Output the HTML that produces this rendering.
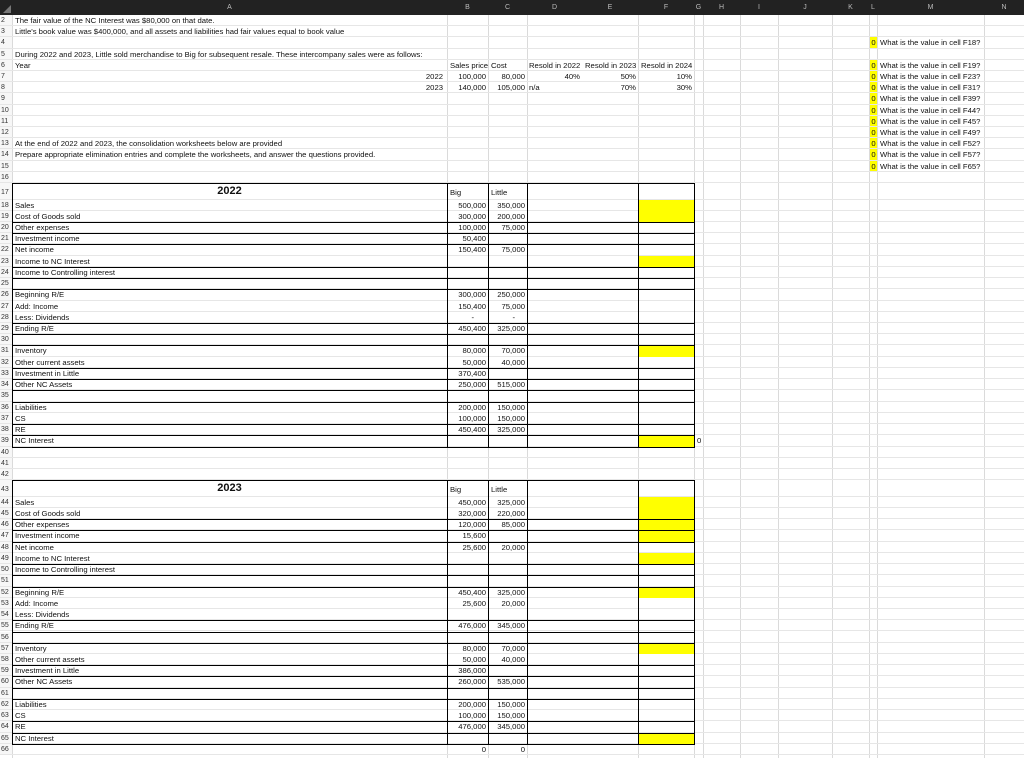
<!DOCTYPE html>
<html><head><meta charset="utf-8"><style>
*{margin:0;padding:0;box-sizing:border-box}
body{width:1024px;height:758px;overflow:hidden;background:#fff;position:relative;font-family:"Liberation Sans",Arial,sans-serif;font-size:7.7px;color:#111}
.hd{position:absolute;left:0;top:0;width:1024px;height:15px;background:#222}
.hd span{position:absolute;top:0;line-height:15px;color:#bbb;font-size:7px;text-align:center}
.corner{position:absolute;left:3px;top:5px;width:0;height:0;border-left:8px solid transparent;border-bottom:8px solid #777}
.r{position:absolute;left:0;width:1024px;height:11.23px;line-height:11px;border-bottom:1px solid #e6e6e6}
.r.s{height:11.2px}
.r.t{height:16.5px;line-height:20px}
.n{position:absolute;left:0;width:12px;padding-left:1px;color:#333;font-size:7px;background:#f7f7f7;height:100%}
.c{position:absolute;top:0;white-space:nowrap;height:100%}
.a{left:15px;width:430px}
.ar{left:12px;width:433px;text-align:right;padding-right:2px}
.b{left:448px;width:40px;text-align:right;padding-right:2px}
.bl{left:450px}
.cc{left:489px;width:38px;text-align:right;padding-right:2px}
.cl{left:491px}
.d{left:528px;width:54px;text-align:right;padding-right:2px}
.dl{left:529px}
.e{left:583px;width:55px;text-align:right;padding-right:2px}
.el{left:585px}
.f{left:639px;width:55px;text-align:right;padding-right:2px}
.fl{left:641px}
.y{position:absolute;left:639px;width:55px;background:#ffff00}
.ly{left:870px;width:7px;background:#ffff00;text-align:center}
.m{left:880px}
.vg{position:absolute;top:15px;width:1px;height:743px;background:#dadada}
.vb{position:absolute;width:1px;background:#000}
.hb{position:absolute;left:12px;width:683px;height:1px;background:#000}
.wt{position:absolute;left:13px;width:681px;background:#fff}
</style></head><body>
<div class="hd"><div class="corner"></div>
<span style="left:12px;width:435px">A</span><span style="left:447px;width:41px">B</span><span style="left:488px;width:39px">C</span><span style="left:527px;width:55px">D</span><span style="left:582px;width:56px">E</span><span style="left:638px;width:56px">F</span><span style="left:694px;width:9px">G</span><span style="left:703px;width:37px">H</span><span style="left:740px;width:38px">I</span><span style="left:778px;width:54px">J</span><span style="left:832px;width:37px">K</span><span style="left:869px;width:8px">L</span><span style="left:877px;width:107px">M</span><span style="left:984px;width:40px">N</span>
</div>

<div class="vg" style="left:12px"></div>
<div class="vg" style="left:447px"></div><div class="vg" style="left:488px"></div><div class="vg" style="left:527px"></div><div class="vg" style="left:638px"></div><div class="vg" style="left:694px"></div><div class="vg" style="left:703px"></div><div class="vg" style="left:740px"></div><div class="vg" style="left:778px"></div><div class="vg" style="left:832px"></div><div class="vg" style="left:869px"></div><div class="vg" style="left:877px"></div><div class="vg" style="left:984px"></div>

<div class="r s" style="top:15px"><span class="n">2</span><span class="c a">The fair value of the NC Interest was $80,000 on that date.</span></div>
<div class="r s" style="top:26.2px"><span class="n">3</span><span class="c a">Little's book value was $400,000, and all assets and liabilities had fair values equal to book value</span></div>
<div class="r s" style="top:37.4px"><span class="n">4</span><span class="c ly">0</span><span class="c m">What is the value in cell F18?</span></div>
<div class="r s" style="top:48.6px"><span class="n">5</span><span class="c a">During 2022 and 2023, Little sold merchandise to Big for subsequent resale. These intercompany sales were as follows:</span></div>
<div class="r s" style="top:59.8px"><span class="n">6</span><span class="c a">Year</span><span class="c bl">Sales price</span><span class="c cl">Cost</span><span class="c dl">Resold in 2022</span><span class="c el">Resold in 2023</span><span class="c fl">Resold in 2024</span><span class="c ly">0</span><span class="c m">What is the value in cell F19?</span></div>
<div class="r s" style="top:71px"><span class="n">7</span><span class="c ar">2022</span><span class="c b">100,000</span><span class="c cc">80,000</span><span class="c d">40%</span><span class="c e">50%</span><span class="c f">10%</span><span class="c ly">0</span><span class="c m">What is the value in cell F23?</span></div>
<div class="r s" style="top:82.2px"><span class="n">8</span><span class="c ar">2023</span><span class="c b">140,000</span><span class="c cc">105,000</span><span class="c dl">n/a</span><span class="c e">70%</span><span class="c f">30%</span><span class="c ly">0</span><span class="c m">What is the value in cell F31?</span></div>
<div class="r s" style="top:93.4px"><span class="n">9</span><span class="c ly">0</span><span class="c m">What is the value in cell F39?</span></div>
<div class="r s" style="top:104.6px"><span class="n">10</span><span class="c ly">0</span><span class="c m">What is the value in cell F44?</span></div>
<div class="r s" style="top:115.8px"><span class="n">11</span><span class="c ly">0</span><span class="c m">What is the value in cell F45?</span></div>
<div class="r s" style="top:127px"><span class="n">12</span><span class="c ly">0</span><span class="c m">What is the value in cell F49?</span></div>
<div class="r s" style="top:138.2px"><span class="n">13</span><span class="c a">At the end of 2022 and 2023, the consolidation worksheets below are provided</span><span class="c ly">0</span><span class="c m">What is the value in cell F52?</span></div>
<div class="r s" style="top:149.4px"><span class="n">14</span><span class="c a">Prepare appropriate elimination entries and complete the worksheets, and answer the questions provided.</span><span class="c ly">0</span><span class="c m">What is the value in cell F57?</span></div>
<div class="r s" style="top:160.6px"><span class="n">15</span><span class="c ly">0</span><span class="c m">What is the value in cell F65?</span></div>
<div class="r s" style="top:171.8px"><span class="n">16</span></div>

<div class="wt" style="top:184px;height:262px"></div>
<div class="r t" style="top:183px"><span class="n">17</span><span class="c" style="left:12px;width:435px;text-align:center;font-weight:bold;font-size:11px;line-height:17px">2022</span><span class="c bl">Big</span><span class="c cl">Little</span></div>
<div class="r" style="top:199.5px"><span class="n">18</span><span class="c a">Sales</span><span class="c b">500,000</span><span class="c cc">350,000</span></div>
<div class="r" style="top:210.73px"><span class="n">19</span><span class="c a">Cost of Goods sold</span><span class="c b">300,000</span><span class="c cc">200,000</span></div>
<div class="r" style="top:221.96px"><span class="n">20</span><span class="c a">Other expenses</span><span class="c b">100,000</span><span class="c cc">75,000</span></div>
<div class="r" style="top:233.19px"><span class="n">21</span><span class="c a">Investment income</span><span class="c b">50,400</span></div>
<div class="r" style="top:244.42px"><span class="n">22</span><span class="c a">Net income</span><span class="c b">150,400</span><span class="c cc">75,000</span></div>
<div class="r" style="top:255.65px"><span class="n">23</span><span class="c a">Income to NC Interest</span></div>
<div class="r" style="top:266.88px"><span class="n">24</span><span class="c a">Income to Controlling interest</span></div>
<div class="r" style="top:278.11px"><span class="n">25</span></div>
<div class="r" style="top:289.34px"><span class="n">26</span><span class="c a">Beginning R/E</span><span class="c b">300,000</span><span class="c cc">250,000</span></div>
<div class="r" style="top:300.57px"><span class="n">27</span><span class="c a">Add: Income</span><span class="c b">150,400</span><span class="c cc">75,000</span></div>
<div class="r" style="top:311.8px"><span class="n">28</span><span class="c a">Less: Dividends</span><span class="c b" style="padding-right:14px">-</span><span class="c cc" style="padding-right:12px">-</span></div>
<div class="r" style="top:323.03px"><span class="n">29</span><span class="c a">Ending R/E</span><span class="c b">450,400</span><span class="c cc">325,000</span></div>
<div class="r" style="top:334.26px"><span class="n">30</span></div>
<div class="r" style="top:345.49px"><span class="n">31</span><span class="c a">Inventory</span><span class="c b">80,000</span><span class="c cc">70,000</span></div>
<div class="r" style="top:356.72px"><span class="n">32</span><span class="c a">Other current assets</span><span class="c b">50,000</span><span class="c cc">40,000</span></div>
<div class="r" style="top:367.95px"><span class="n">33</span><span class="c a">Investment in Little</span><span class="c b">370,400</span></div>
<div class="r" style="top:379.18px"><span class="n">34</span><span class="c a">Other NC Assets</span><span class="c b">250,000</span><span class="c cc">515,000</span></div>
<div class="r" style="top:390.41px"><span class="n">35</span></div>
<div class="r" style="top:401.64px"><span class="n">36</span><span class="c a">Liabilities</span><span class="c b">200,000</span><span class="c cc">150,000</span></div>
<div class="r" style="top:412.87px"><span class="n">37</span><span class="c a">CS</span><span class="c b">100,000</span><span class="c cc">150,000</span></div>
<div class="r" style="top:424.1px"><span class="n">38</span><span class="c a">RE</span><span class="c b">450,400</span><span class="c cc">325,000</span></div>
<div class="r" style="top:435.33px"><span class="n">39</span><span class="c a">NC Interest</span><span class="c" style="left:697px">0</span></div>
<div class="r" style="top:446.56px"><span class="n">40</span></div>
<div class="r" style="top:457.79px"><span class="n">41</span></div>
<div class="r" style="top:469.02px"><span class="n">42</span></div>

<div class="wt" style="top:481px;height:262px"></div>
<div class="r t" style="top:480.25px"><span class="n">43</span><span class="c" style="left:12px;width:435px;text-align:center;font-weight:bold;font-size:11px;line-height:17px">2023</span><span class="c bl">Big</span><span class="c cl">Little</span></div>
<div class="r" style="top:496.75px"><span class="n">44</span><span class="c a">Sales</span><span class="c b">450,000</span><span class="c cc">325,000</span></div>
<div class="r" style="top:507.98px"><span class="n">45</span><span class="c a">Cost of Goods sold</span><span class="c b">320,000</span><span class="c cc">220,000</span></div>
<div class="r" style="top:519.21px"><span class="n">46</span><span class="c a">Other expenses</span><span class="c b">120,000</span><span class="c cc">85,000</span></div>
<div class="r" style="top:530.44px"><span class="n">47</span><span class="c a">Investment income</span><span class="c b">15,600</span></div>
<div class="r" style="top:541.67px"><span class="n">48</span><span class="c a">Net income</span><span class="c b">25,600</span><span class="c cc">20,000</span></div>
<div class="r" style="top:552.9px"><span class="n">49</span><span class="c a">Income to NC Interest</span></div>
<div class="r" style="top:564.13px"><span class="n">50</span><span class="c a">Income to Controlling interest</span></div>
<div class="r" style="top:575.36px"><span class="n">51</span></div>
<div class="r" style="top:586.59px"><span class="n">52</span><span class="c a">Beginning R/E</span><span class="c b">450,400</span><span class="c cc">325,000</span></div>
<div class="r" style="top:597.82px"><span class="n">53</span><span class="c a">Add: Income</span><span class="c b">25,600</span><span class="c cc">20,000</span></div>
<div class="r" style="top:609.05px"><span class="n">54</span><span class="c a">Less: Dividends</span></div>
<div class="r" style="top:620.28px"><span class="n">55</span><span class="c a">Ending R/E</span><span class="c b">476,000</span><span class="c cc">345,000</span></div>
<div class="r" style="top:631.51px"><span class="n">56</span></div>
<div class="r" style="top:642.74px"><span class="n">57</span><span class="c a">Inventory</span><span class="c b">80,000</span><span class="c cc">70,000</span></div>
<div class="r" style="top:653.97px"><span class="n">58</span><span class="c a">Other current assets</span><span class="c b">50,000</span><span class="c cc">40,000</span></div>
<div class="r" style="top:665.2px"><span class="n">59</span><span class="c a">Investment in Little</span><span class="c b">386,000</span></div>
<div class="r" style="top:676.43px"><span class="n">60</span><span class="c a">Other NC Assets</span><span class="c b">260,000</span><span class="c cc">535,000</span></div>
<div class="r" style="top:687.66px"><span class="n">61</span></div>
<div class="r" style="top:698.89px"><span class="n">62</span><span class="c a">Liabilities</span><span class="c b">200,000</span><span class="c cc">150,000</span></div>
<div class="r" style="top:710.12px"><span class="n">63</span><span class="c a">CS</span><span class="c b">100,000</span><span class="c cc">150,000</span></div>
<div class="r" style="top:721.35px"><span class="n">64</span><span class="c a">RE</span><span class="c b">476,000</span><span class="c cc">345,000</span></div>
<div class="r" style="top:732.58px"><span class="n">65</span><span class="c a">NC Interest</span></div>
<div class="r" style="top:743.81px"><span class="n">66</span><span class="c b">0</span><span class="c cc">0</span></div>

<div class="y" style="top:200px;height:22px"></div>
<div class="y" style="top:256px;height:11px"></div>
<div class="y" style="top:346px;height:11px"></div>
<div class="y" style="top:436px;height:11px"></div>
<div class="y" style="top:497px;height:45px"></div>
<div class="y" style="top:553px;height:11px"></div>
<div class="y" style="top:587px;height:11px"></div>
<div class="y" style="top:643px;height:11px"></div>
<div class="y" style="top:733px;height:11px"></div>

<div class="vb" style="left:12px;top:183px;height:264px"></div>
<div class="vb" style="left:447px;top:183px;height:264px"></div>
<div class="vb" style="left:488px;top:183px;height:264px"></div>
<div class="vb" style="left:527px;top:183px;height:264px"></div>
<div class="vb" style="left:638px;top:183px;height:264px"></div>
<div class="vb" style="left:694px;top:183px;height:264px"></div>
<div class="vb" style="left:12px;top:480px;height:264px"></div>
<div class="vb" style="left:447px;top:480px;height:264px"></div>
<div class="vb" style="left:488px;top:480px;height:264px"></div>
<div class="vb" style="left:527px;top:480px;height:264px"></div>
<div class="vb" style="left:638px;top:480px;height:264px"></div>
<div class="vb" style="left:694px;top:480px;height:264px"></div>

<div class="hb" style="top:183px"></div><div class="hb" style="top:221.96px"></div><div class="hb" style="top:233.19px"></div><div class="hb" style="top:244.42px"></div><div class="hb" style="top:266.88px"></div><div class="hb" style="top:278.11px"></div><div class="hb" style="top:289.34px"></div><div class="hb" style="top:323.03px"></div><div class="hb" style="top:334.26px"></div><div class="hb" style="top:345.49px"></div><div class="hb" style="top:367.95px"></div><div class="hb" style="top:379.18px"></div><div class="hb" style="top:390.41px"></div><div class="hb" style="top:401.64px"></div><div class="hb" style="top:424.1px"></div><div class="hb" style="top:435.33px"></div><div class="hb" style="top:446.56px"></div>
<div class="hb" style="top:480.25px"></div><div class="hb" style="top:519.21px"></div><div class="hb" style="top:530.44px"></div><div class="hb" style="top:541.67px"></div><div class="hb" style="top:564.13px"></div><div class="hb" style="top:575.36px"></div><div class="hb" style="top:586.59px"></div><div class="hb" style="top:620.28px"></div><div class="hb" style="top:631.51px"></div><div class="hb" style="top:642.74px"></div><div class="hb" style="top:665.2px"></div><div class="hb" style="top:676.43px"></div><div class="hb" style="top:687.66px"></div><div class="hb" style="top:698.89px"></div><div class="hb" style="top:721.35px"></div><div class="hb" style="top:732.58px"></div><div class="hb" style="top:743.81px"></div>
</body></html>
